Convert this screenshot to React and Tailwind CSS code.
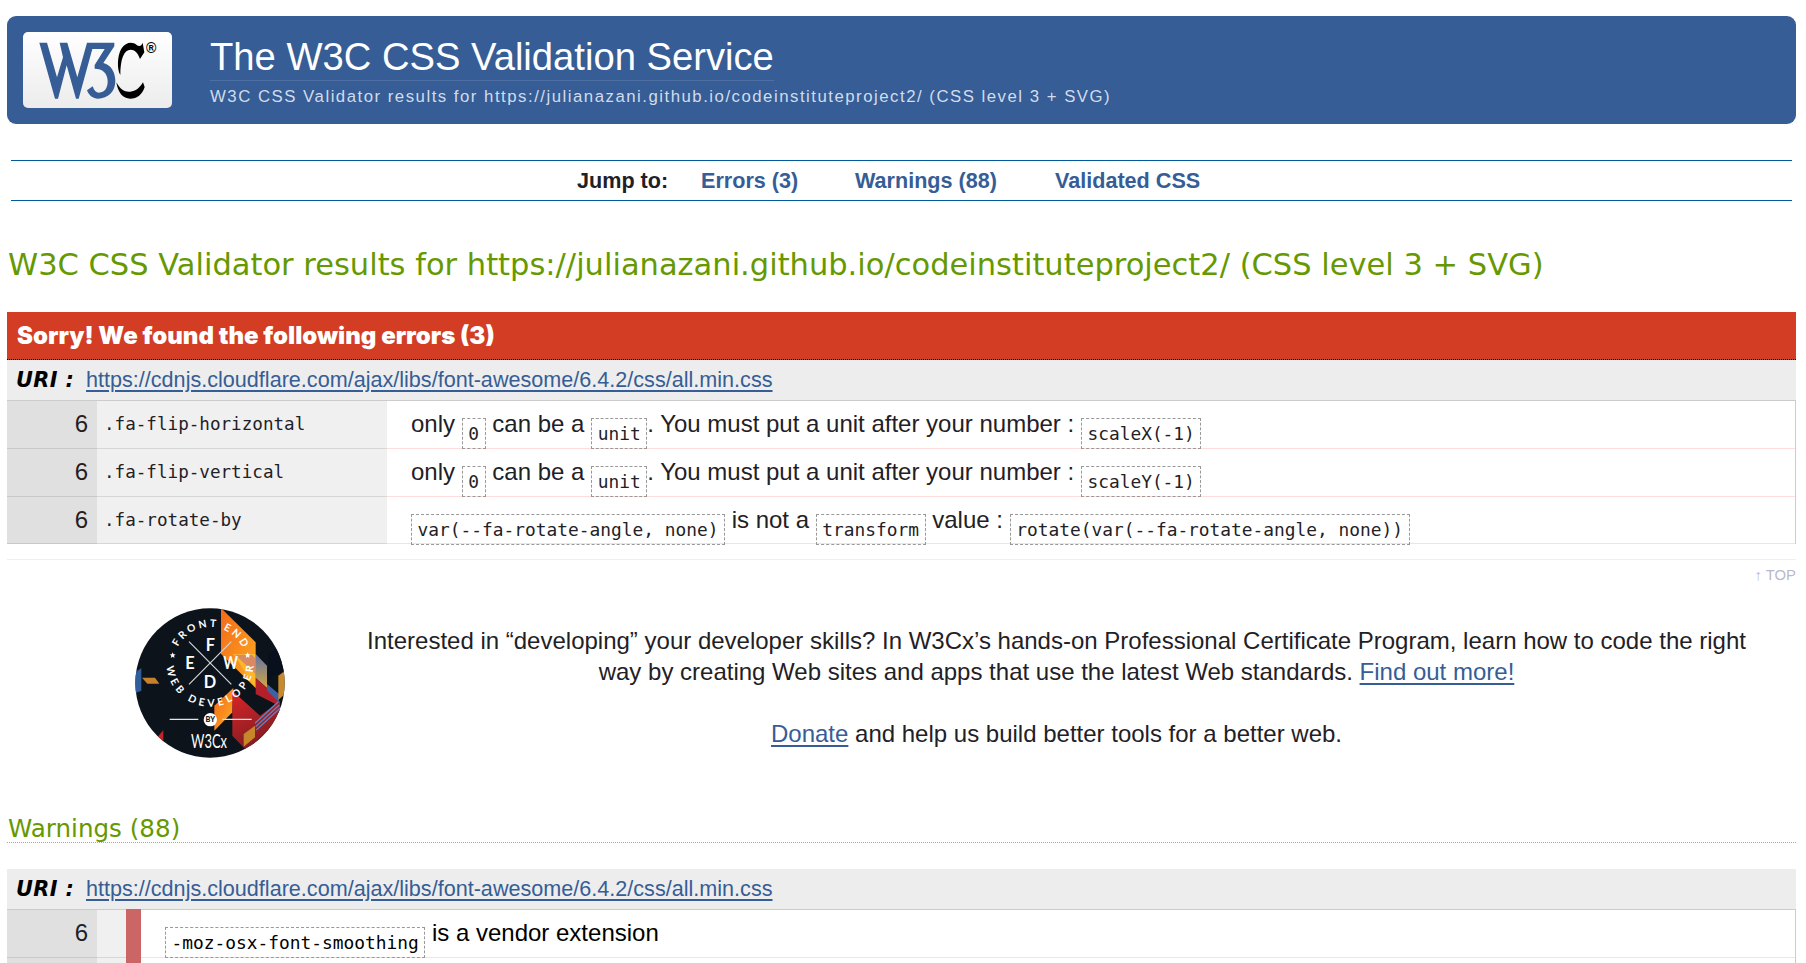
import React from "react";

const CSS_URI = "https://cdnjs.cloudflare.com/ajax/libs/font-awesome/6.4.2/css/all.min.css";

function W3CLogo() {
  return (
    <svg viewBox="0 0 447 228" className="block h-[76px] w-[149px]">
      <defs>
        <linearGradient id="card" x1="0" y1="0" x2="0" y2="1">
          <stop offset="0" stopColor="#ffffff" />
          <stop offset="1" stopColor="#ececec" />
        </linearGradient>
      </defs>
      <rect width="447" height="228" rx="15" fill="url(#card)" />
      <g transform="translate(-70 -67)">
        <path
          fill="#365d95"
          d="M119 99H142L172 203L190 143L180 99H203L233 203L262 99H344V110L311 160C335 165 347 190 347 215C347 245 325 267 295 267C280 267 268 258 262 242L279 230C283 243 289 249 298 249C315 249 324 235 324 215C324 190 308 177 285 177V166L315 118H278L237 267H229L201 167L175 267H166Z"
        />
        <path d="M429 99L434 128L421 148C414 128 405 120 393 120C372 120 362 150 362 196C352 180 352 140 365 117C378 97 398 95 410 105C418 111 425 110 429 99Z" />
        <path d="M350 218C362 240 376 248 392 246C408 245 420 235 430 218L435 232C428 255 412 267 392 267C370 267 355 250 350 218Z" />
        <text x="439" y="131" fontSize="42" fontWeight="700" fontFamily="Liberation Sans, sans-serif">®</text>
      </g>
    </svg>
  );
}

function Star({ x, y }) {
  return (
    <polygon
      transform={`translate(${x} ${y})`}
      points="0,-9 2.6,-3 9,-2.8 4,1.6 5.6,8 0,4.4 -5.6,8 -4,1.6 -9,-2.8 -2.6,-3"
      fill="#fff"
    />
  );
}

function CourseBadge() {
  return (
    <svg viewBox="45 52 450 450" className="block h-[150px] w-[150px]" fontFamily="Lato, sans-serif">
      <defs>
        <clipPath id="disc">
          <circle cx="270" cy="277" r="224" />
        </clipPath>
        <linearGradient id="flame" x1="0" y1="0" x2="1" y2="1">
          <stop offset="0" stopColor="#f26a1b" />
          <stop offset="0.5" stopColor="#f98a1c" />
          <stop offset="1" stopColor="#f9b32a" />
        </linearGradient>
        <linearGradient id="haze" x1="0" y1="0" x2="0" y2="1">
          <stop offset="0" stopColor="#5f73a8" />
          <stop offset="1" stopColor="#d3a63f" />
        </linearGradient>
        <linearGradient id="ruby" x1="0" y1="0" x2="0.4" y2="1">
          <stop offset="0" stopColor="#dd2527" />
          <stop offset="1" stopColor="#7d1c22" />
        </linearGradient>
        <path id="upper" d="M162 217A108 108 0 0 1 378 217" />
        <path id="lower" d="M139 217A131 131 0 0 0 401 217" />
      </defs>
      <g clipPath="url(#disc)">
        <rect x="45" y="52" width="450" height="450" fill="#0c131b" />
        <path d="M303 52L407 155V292L303 190Z" fill="url(#flame)" />
        <path d="M340 190H407V292Z" fill="#fbb62b" />
        <path d="M345 192H395L407 204V250Z" fill="#d98a63" />
        <path d="M407 190L441 225V292L407 262Z" fill="url(#haze)" />
        <path d="M407 262L477 325V345L407 310Z" fill="#b3202a" />
        <path d="M441 280L477 310V335L441 300Z" fill="#3c62a5" />
        <path d="M445 190L495 160V250H470L445 270Z" fill="#08101d" />
        <path d="M475 255L495 240V310L475 328Z" fill="#c88a2c" />
        <path d="M283 345L340 292L337 365L283 420Z" fill="url(#flame)" />
        <path d="M337 300L420 375L480 330V420L380 480L337 435Z" fill="url(#ruby)" />
        <path d="M371 430L405 405V440L371 468Z" fill="#c8862b" />
        <path d="M405 398L475 333M407 408L478 343M409 418L480 353" stroke="#5e84c4" strokeWidth="4" />
        <path d="M45 245L64 233V300L45 308Z" fill="#325d9b" />
        <path d="M66 261H105L118 279H82Z" fill="#c5812c" />
        <path d="M108 445L130 418V455Z" fill="#c3242c" />
        <path d="M207 153L334 281M334 153L207 281" stroke="#d4d7da" strokeWidth="3.5" />
        <path d="M149 386H235M307 386H395" stroke="#e4e5e6" strokeWidth="4" />
        <circle cx="271" cy="387" r="20" fill="#fff" />
      </g>
      <g fill="#fff" fontWeight="700">
        <text fontSize="31">
          <textPath href="#upper" startOffset="50" textLength="242">FRONT END</textPath>
        </text>
        <text fontSize="31">
          <textPath href="#lower" startOffset="11" textLength="392">WEB DEVELOPER</textPath>
        </text>
        <g textAnchor="middle" fontSize="49">
          <text x="271" y="181">F</text>
          <text x="210" y="235">E</text>
          <text x="332" y="235" textLength="44" lengthAdjust="spacingAndGlyphs">W</text>
          <text x="270" y="292">D</text>
        </g>
        <text x="271" y="395" textAnchor="middle" fontSize="22" fontWeight="900" fill="#0c131b">BY</text>
        <text x="213" y="472" fontSize="56" fontWeight="400" textLength="108" lengthAdjust="spacingAndGlyphs">W3Cx</text>
      </g>
      <Star x={158} y={194} />
      <Star x={383} y={194} />
    </svg>
  );
}

function Code({ children }) {
  return (
    <code className="inline-block h-[31px] border border-dashed border-[#999] px-[5.6px] align-[-8px] font-['DejaVu_Sans_Mono',monospace] text-[17.85px] leading-[29px]">
      {children}
    </code>
  );
}

function UriBar() {
  return (
    <div className="flex h-[41px] items-center border-b border-[#ccc] bg-[#ededed] pl-[9px] leading-[40px]">
      <span className="w-[70px] font-['DejaVu_Sans',sans-serif] text-[20.8px] font-bold tracking-[0.4px] whitespace-nowrap text-black italic">URI :</span>
      <a className="text-[21.6px] text-[#365d95] underline decoration-2 underline-offset-[3px]">{CSS_URI}</a>
    </div>
  );
}

function ErrorRow({ line, selector, children, last }) {
  return (
    <div className={last ? "flex h-[47px]" : "flex h-[48px]"}>
      <div className="w-[90px] border-b border-[#c8c8c8] bg-[#e0e0e0] pr-[9px] text-right leading-[46px]">{line}</div>
      <div className="w-[290px] border-b border-[#d6d6d6] bg-[#f0f0f0] pl-[7px] font-['DejaVu_Sans_Mono',monospace] text-[17.6px] leading-[46px]">{selector}</div>
      <div className="flex-1 border-b border-[#fdd] pl-[24px] leading-[46px] whitespace-nowrap">{children}</div>
    </div>
  );
}

function WarningRow({ line, children }) {
  return (
    <div className="flex h-[48px]">
      <div className="w-[90px] border-b border-[#c8c8c8] bg-[#e0e0e0] pr-[9px] text-right leading-[46px]">{line}</div>
      <div className="w-[29px] border-b border-[#d6d6d6] bg-[#f0f0f0]" />
      <div className="-mt-px w-[15px] bg-[#cc6666]" />
      <div className="flex-1 border-b border-[#fdd] pl-[24px] leading-[46px] whitespace-nowrap text-black">{children}</div>
    </div>
  );
}

export default function App() {
  return (
    <div className="h-[963px] overflow-hidden bg-white px-[7px] pt-[16px] pr-[10px] font-['Liberation_Sans',Arial,sans-serif] text-[24px] text-[#1f2126]">
      <header className="flex h-[108px] rounded-[9px] bg-[#365d95] pt-[16px] pl-[16px]">
        <W3CLogo />
        <div className="ml-[38px] flex flex-col items-start">
          <h1 className="mt-[2px] h-[47px] border-b border-[#4e6fa3] text-[38.2px] leading-[46px] whitespace-nowrap text-white">The W3C CSS Validation Service</h1>
          <p className="mt-[5px] text-[16.8px] leading-[22px] tracking-[1.5px] whitespace-nowrap text-[#d1dcec]">
            W3C CSS Validator results for https://julianazani.github.io/codeinstituteproject2/ (CSS level 3 + SVG)
          </p>
        </div>
      </header>

      <nav className="mt-[36px] mr-[4px] ml-[4px] flex h-[41px] border-y border-[#005a9c] pl-[566px] text-[21.6px] leading-[39px] font-bold whitespace-nowrap text-[#365d95]">
        <span className="w-[124px] text-[#1f2126]">Jump to:</span>
        <a className="w-[154px]">Errors (3)</a>
        <a className="w-[200px]">Warnings (88)</a>
        <a>Validated CSS</a>
      </nav>

      <h2 className="mt-[41px] h-[70px] pl-px font-['DejaVu_Sans',sans-serif] text-[30.5px] leading-[46px] whitespace-nowrap text-[#690]">
        W3C CSS Validator results for https://julianazani.github.io/codeinstituteproject2/ (CSS level 3 + SVG)
      </h2>

      <section>
        <h3 className="h-[48px] border-b border-dotted border-black bg-[#d23d24] pl-[10px] font-['Inter',sans-serif] text-[24px] leading-[47px] font-black whitespace-nowrap text-white">
          Sorry! We found the following errors (3)
        </h3>
        <UriBar />
        <div className="border-r border-[#ccc]">
          <ErrorRow line="6" selector=".fa-flip-horizontal">
            only <Code>0</Code> can be a <Code>unit</Code>. You must put a unit after your number : <Code>scaleX(-1)</Code>
          </ErrorRow>
          <ErrorRow line="6" selector=".fa-flip-vertical">
            only <Code>0</Code> can be a <Code>unit</Code>. You must put a unit after your number : <Code>scaleY(-1)</Code>
          </ErrorRow>
          <ErrorRow line="6" selector=".fa-rotate-by" last>
            <Code>var(--fa-rotate-angle, none)</Code> is not a <Code>transform</Code> value : <Code>rotate(var(--fa-rotate-angle, none))</Code>
          </ErrorRow>
        </div>
        <div className="mt-[15px] h-[49px] border-t border-[#eeeef8] pt-[5px] text-right text-[14.8px] leading-[20px] text-[#b8b8cc]">↑ TOP</div>
      </section>

      <section className="flex h-[191px]">
        <div className="w-[350px] pl-[128px]">
          <CourseBadge />
        </div>
        <div className="w-[1399px] pt-[17px] text-center leading-[31px]">
          <p>
            Interested in “developing” your developer skills? In W3Cx’s hands-on Professional Certificate Program, learn how to code the right
            <br />
            way by creating Web sites and apps that use the latest Web standards. <a className="text-[#365d95] underline decoration-2 underline-offset-[3px]">Find out more!</a>
          </p>
          <p className="mt-[31px]">
            <a className="text-[#365d95] underline decoration-2 underline-offset-[3px]">Donate</a> and help us build better tools for a better web.
          </p>
        </div>
      </section>

      <section>
        <h3 className="mt-[11px] h-[33px] border-b border-dotted border-[#aa9] pl-px font-['DejaVu_Sans',sans-serif] text-[24.6px] leading-[37px] whitespace-nowrap text-[#690]">Warnings (88)</h3>
        <div className="mt-[26px]">
          <UriBar />
          <div className="border-r border-[#ccc]">
            <WarningRow line="6">
              <Code>-moz-osx-font-smoothing</Code> is a vendor extension
            </WarningRow>
            <WarningRow line="" />
          </div>
        </div>
      </section>
    </div>
  );
}
